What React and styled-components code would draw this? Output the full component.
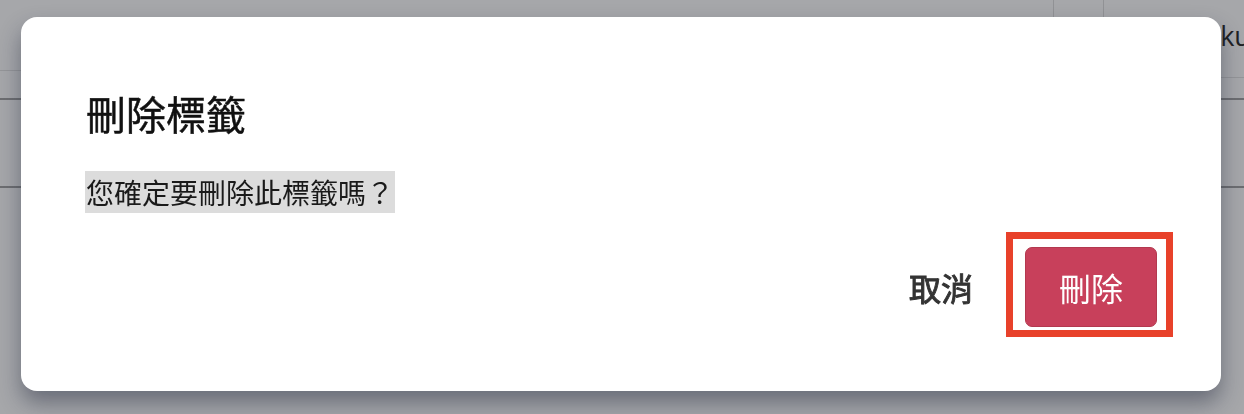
import React from 'react';
import styled, { createGlobalStyle } from 'styled-components';

const GlobalStyle = createGlobalStyle`
  html, body {
    margin: 0;
    padding: 0;
    background: #ffffff;
  }
  body {
    font-family: "Noto Sans CJK TC", "Noto Sans", sans-serif;
    overflow: hidden;
  }
`;

export default function App () {
  return (
    <>
      <GlobalStyle/>
      <Page>
        <TopBar>
          <BarSpacer/>
          <BarCell/>
          <UserCell>
            <Avatar/>
            <UserName>Hokuto</UserName>
          </UserCell>
        </TopBar>
        <SubBar/>
        <TableHead/>
        <TableRow/>
      </Page>

      <Overlay>
        <Dialog role="dialog" aria-labelledby="dlg-title">
          <Title id="dlg-title">刪除標籤</Title>
          <Message><Highlight>您確定要刪除此標籤嗎？</Highlight></Message>
          <Actions>
            <CancelButton>取消</CancelButton>
            <Marked>
              <DangerButton>刪除</DangerButton>
            </Marked>
          </Actions>
        </Dialog>
      </Overlay>
    </>
  );
}

const Page = styled.div`
  width: 100vw;
  height: 100vh;
  display: flex;
  flex-direction: column;
  background: #fff;
`;

const TopBar = styled.div`
  display: flex;
  align-items: flex-start;
  height: 78px;
`;

const BarSpacer = styled.div`
  flex: 0 0 1054px;
  height: 71px;
  box-sizing: border-box;
  border-right: 1px solid #dedede;
  border-bottom: 1px solid #e4e4e4;
`;

const BarCell = styled.div`
  flex: 0 0 50px;
  height: 78px;
  box-sizing: border-box;
  border-right: 1px solid #dedede;
  border-bottom: 1px solid #e4e4e4;
`;

const UserCell = styled.div`
  flex: 1;
  height: 78px;
  box-sizing: border-box;
  border-bottom: 1px solid #e4e4e4;
  display: flex;
  align-items: center;
  gap: 12px;
  padding-left: 32px;
  padding-bottom: 6px;
  white-space: nowrap;
  overflow: hidden;
`;

const Avatar = styled.div`
  width: 34px;
  height: 34px;
  flex: none;
  border-radius: 50%;
  border: 1px solid #c8c8c8;
`;

const UserName = styled.span`
  font-family: "Open Sans", "Noto Sans", sans-serif;
  font-size: 27px;
  color: #2e2e2e;
`;

const SubBar = styled.div`
  height: 20px;
  border-bottom: 2px solid #a6a6a6;
`;

const TableHead = styled.div`
  height: 86px;
  border-bottom: 2px solid #a6a6a6;
`;

const TableRow = styled.div`
  flex: 1;
`;

const Overlay = styled.div`
  position: fixed;
  inset: 0;
  background: rgba(8, 12, 20, 0.36);
  display: flex;
  align-items: flex-start;
  padding: 17px 0 0 21px;
`;

const Dialog = styled.div`
  box-sizing: border-box;
  width: 1200px;
  height: 374px;
  background: #fff;
  border-radius: 16px;
  padding: 64px 64px 64px 65px;
  display: flex;
  flex-direction: column;
  box-shadow: 0 12px 22px rgba(30, 38, 60, 0.45);
`;

const Title = styled.h2`
  margin: 2px 0 0;
  font-size: 40px;
  line-height: 60px;
  font-weight: 400;
  color: #111;
  -webkit-text-stroke: 0.5px #111;
`;

const Message = styled.p`
  margin: 28px 0 0 -1px;
  font-size: 28px;
  line-height: 42px;
  color: #1a1a1a;
`;

const Highlight = styled.span`
  display: inline-block;
  height: 42px;
  background: #dcdcdc;
  padding: 0 1px;
`;

const Actions = styled.div`
  margin-top: auto;
  display: flex;
  justify-content: flex-end;
  align-items: center;
  gap: 28px;
`;

const ButtonBase = styled.button`
  font-family: "Noto Sans CJK TC", "Noto Sans", sans-serif;
  font-size: 32px;
  height: 80px;
  border-radius: 7px;
  cursor: pointer;
`;

const CancelButton = styled(ButtonBase)`
  background: transparent;
  border: none;
  padding: 0 24px;
  color: #333;
  font-weight: 400;
  -webkit-text-stroke: 0.9px #333;
`;

const Marked = styled.div`
  position: relative;
  display: flex;
  &::after {
    content: '';
    position: absolute;
    top: -15px;
    left: -19px;
    right: -16px;
    bottom: -10px;
    border: 7px solid #e8412a;
    pointer-events: none;
  }
`;

const DangerButton = styled(ButtonBase)`
  width: 132px;
  padding: 0;
  background: #c8405b;
  border: 1px solid #b3394f;
  color: #fff;
  font-weight: 400;
`;
